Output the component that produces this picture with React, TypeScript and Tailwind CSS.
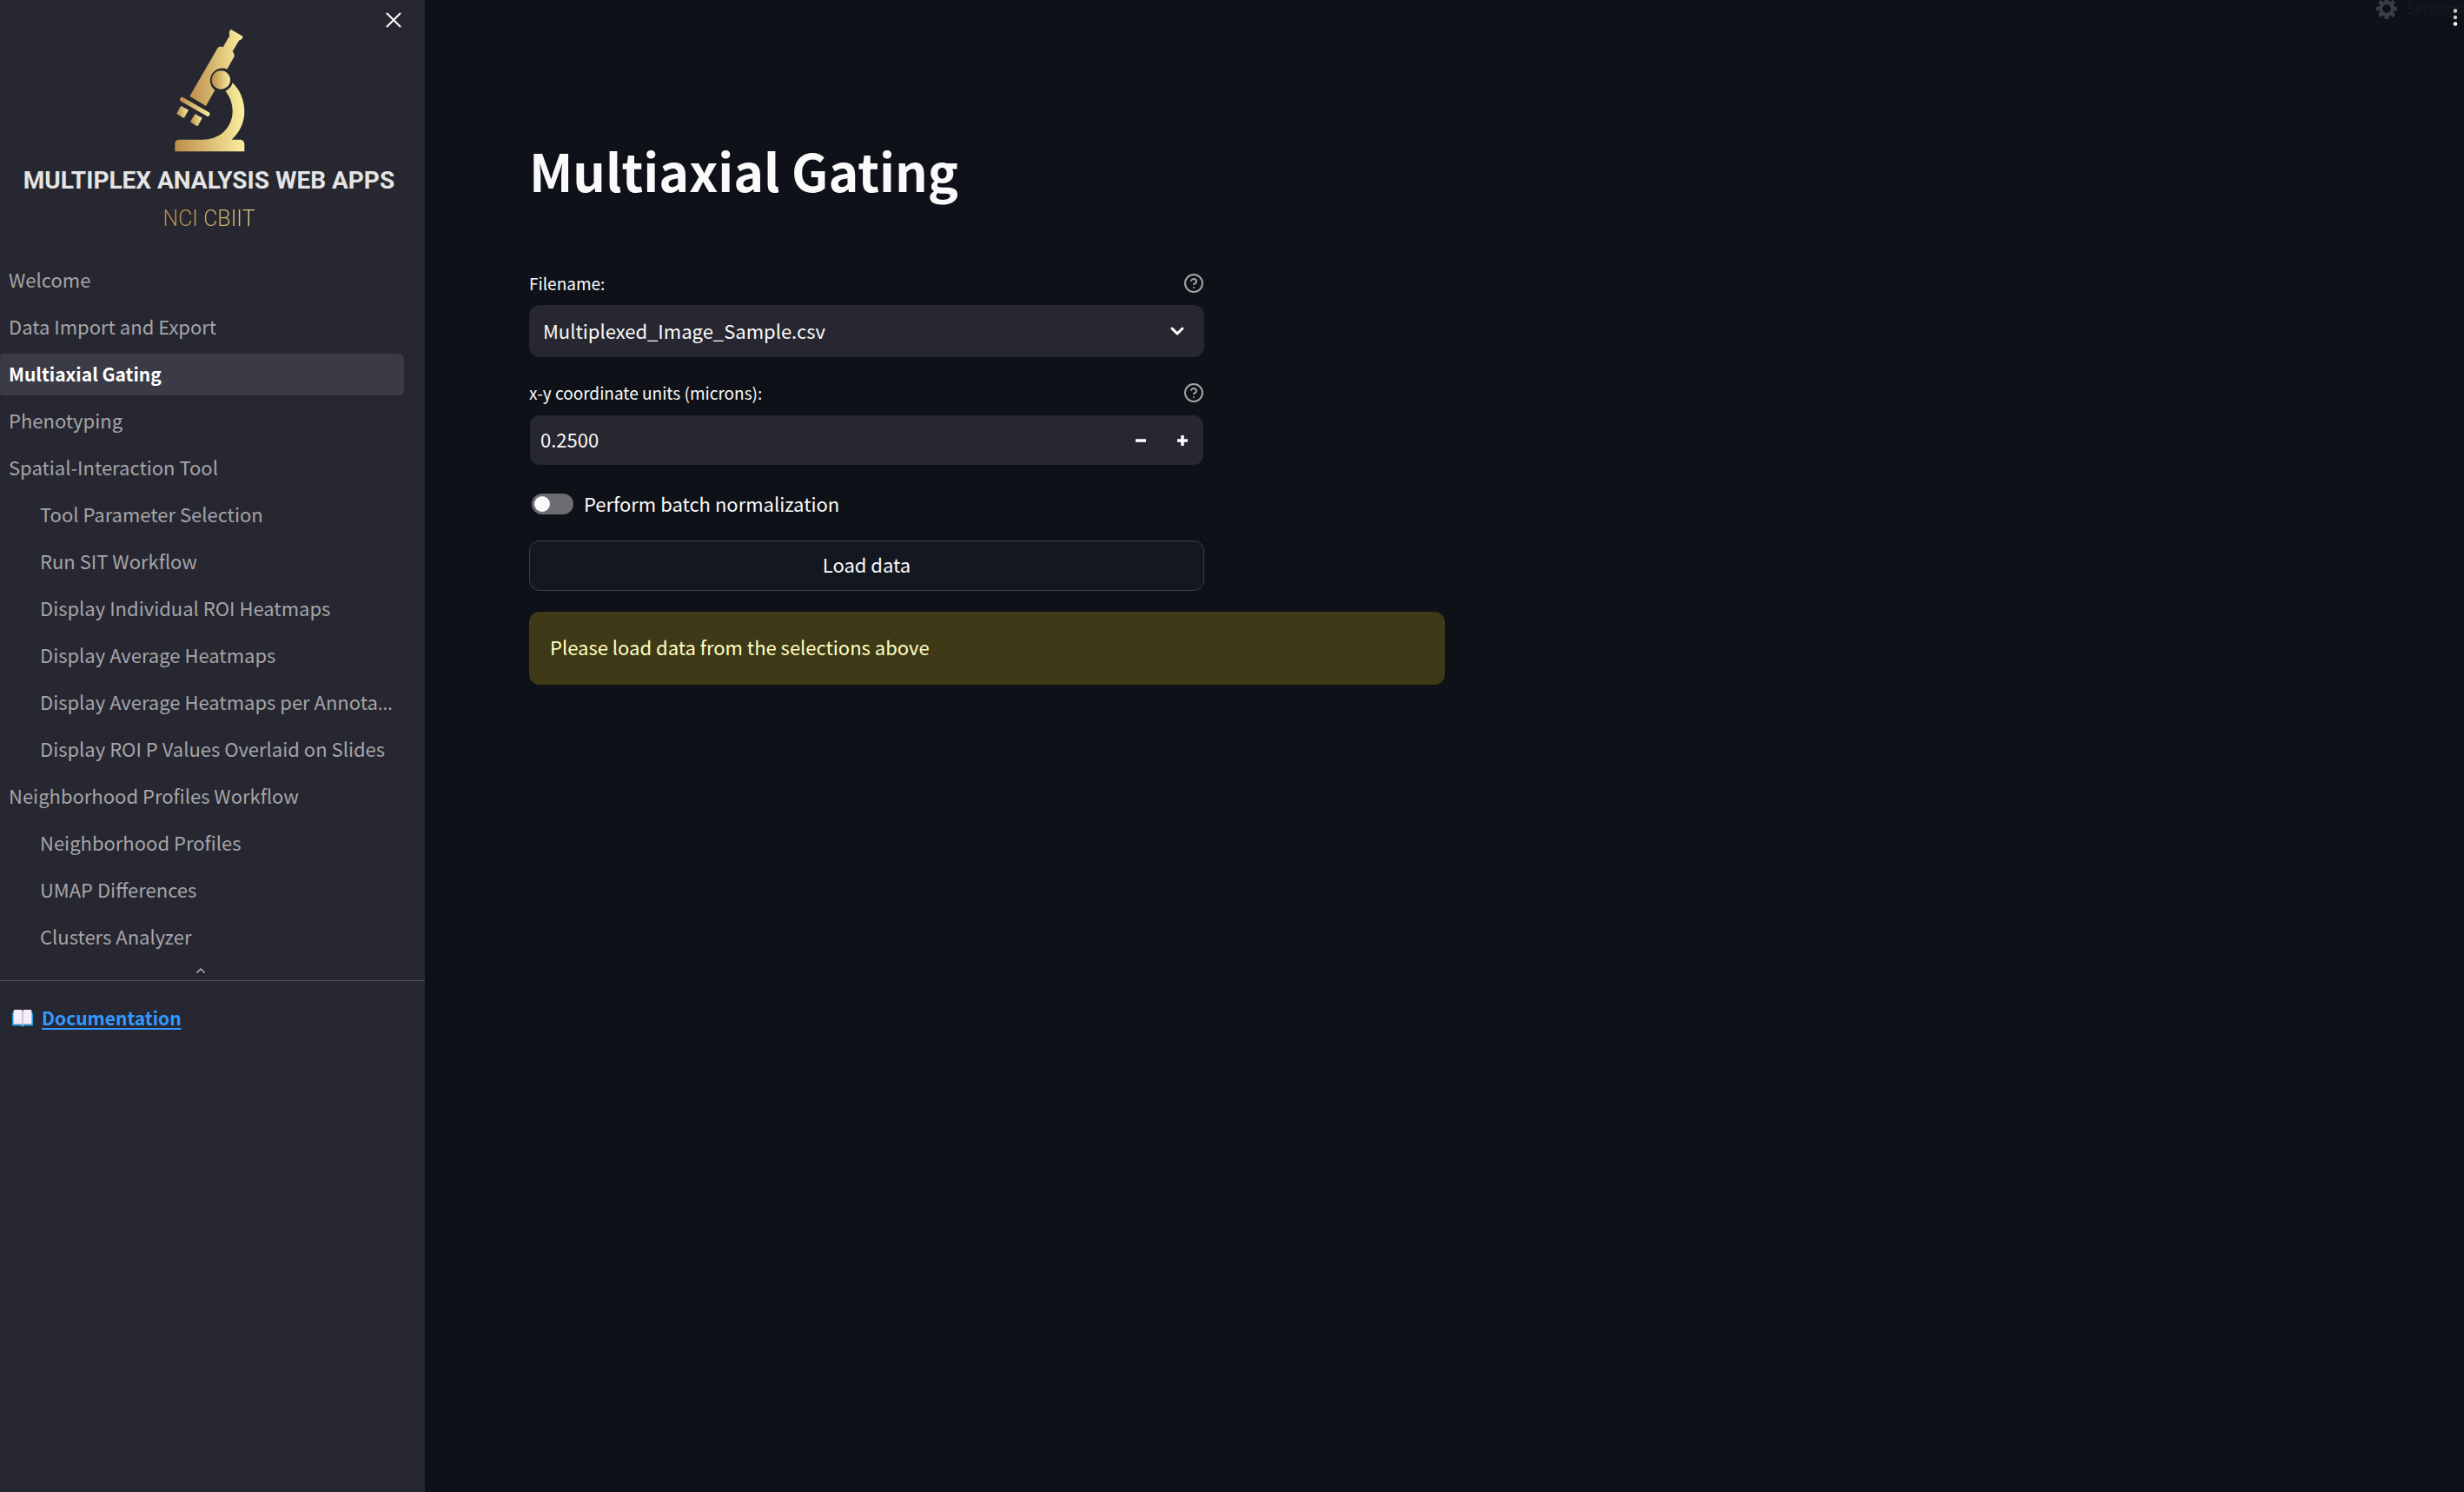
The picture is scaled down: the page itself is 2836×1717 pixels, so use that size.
import { useState } from 'react';

type NavItem = { label: string; nested?: boolean; active?: boolean; shortened?: boolean };

const navItems: NavItem[] = [
  { label: 'Welcome' },
  { label: 'Data Import and Export' },
  { label: 'Multiaxial Gating', active: true },
  { label: 'Phenotyping' },
  { label: 'Spatial-Interaction Tool' },
  { label: 'Tool Parameter Selection', nested: true },
  { label: 'Run SIT Workflow', nested: true },
  { label: 'Display Individual ROI Heatmaps', nested: true },
  { label: 'Display Average Heatmaps', nested: true },
  { label: 'Display Average Heatmaps per Annota', nested: true, shortened: true },
  { label: 'Display ROI P Values Overlaid on Slides', nested: true },
  { label: 'Neighborhood Profiles Workflow' },
  { label: 'Neighborhood Profiles', nested: true },
  { label: 'UMAP Differences', nested: true },
  { label: 'Clusters Analyzer', nested: true },
];

function MicroscopeLogo() {
  return (
    <svg viewBox="60 40 246 426" className="h-[142px] w-[82px]" aria-hidden="true">
      <defs>
        <linearGradient id="gold">
          <stop offset="0" stopColor="#bd8d4b" />
          <stop offset="1" stopColor="#f9ee9e" />
        </linearGradient>
      </defs>
      <g fill="url(#gold)">
        <path d="M257 42 L298 66 Q300 76 286 80 L263 119 Q269 124 269 136 L244 180 A42 42 0 0 0 202 252 L171 307 L115 273 L212 106 Q218 98 230 104 L253 64 Q248 52 257 42 Z" />
        <circle cx="223" cy="217" r="32" />
        <path d="M90 276 L182 329 Q187 333 184 338 Q180 345 175 342 L83 290 Q79 287 82 281 Q86 274 90 276 Z" />
        <path d="M86 307 L111 321 L97 346 Q95 349 91 347 L71 335 Q70 332 72 329 L83 309 Z" />
        <path d="M134 334 L158 348 L145 373 Q142 377 138 375 L119 363 Q117 360 119 357 Z" />
        <path d="M64 464 V438 Q64 423 79 423 H160 C218 423 263 382 263 325 C263 298 254 274 238 255 Q258 246 263 227 C289 251 304 287 304 326 C304 364 287 399 260 423 H288 Q304 423 304 440 V464 Z" />
      </g>
    </svg>
  );
}

function HelpIcon() {
  return (
    <svg viewBox="0 0 24 24" className="size-6" fill="none" stroke="#a3a4a6" strokeWidth="2" strokeLinecap="round" strokeLinejoin="round" aria-hidden="true">
      <circle cx="12" cy="12" r="10" />
      <path d="M9.09 9a3 3 0 0 1 5.83 1c0 2-3 3-3 3" />
      <path d="M12 17h.01" />
    </svg>
  );
}

function FieldLabel({ htmlFor, children }: { htmlFor: string; children: string }) {
  return (
    <div className="flex h-[30px] items-center justify-between">
      <label htmlFor={htmlFor} className="text-[19px] leading-[30px]">
        {children}
      </label>
      <button type="button" aria-label={`Help for ${children}`}>
        <HelpIcon />
      </button>
    </div>
  );
}

function BookIcon() {
  return (
    <svg viewBox="0 0 24 20" className="h-5 w-6" aria-hidden="true">
      <path d="M0 3.500h24v15H14l-2 1.500-2-1.500H0z" fill="#1a9be0" />
      <path d="M1.500 1.500Q1.500 0 3 0h7.500L12 1.200 13.500 0H21q1.500 0 1.500 1.500V17H13.500L12 17.800 10.500 17h-9z" fill="#f3eef8" />
      <path d="M12 1v16.500" stroke="#b9b0c4" strokeWidth="1.200" />
      <path d="M1.500 16.500h9l1.500.7 1.500-.7h9" stroke="#b9b0c4" strokeWidth="1" fill="none" />
    </svg>
  );
}

function Sidebar() {
  return (
    <aside className="relative w-[489px] shrink-0 bg-[#262730]">
      <button type="button" aria-label="Close sidebar" className="absolute top-[11px] right-6 size-6">
        <svg viewBox="0 0 24 24" className="size-6" stroke="#ffffff" strokeWidth="2" strokeLinecap="round" aria-hidden="true">
          <path d="M4.500 4.500l15 15M19.500 4.500l-15 15" />
        </svg>
      </button>
      <header className="flex flex-col items-center pt-[33px] pr-2 whitespace-nowrap">
        <MicroscopeLogo />
        <p className="mt-4 font-['Roboto',sans-serif] text-[28px] leading-[34px] font-bold text-[#e4e4e4]">
          MULTIPLEX ANALYSIS WEB APPS
        </p>
        <p className="mt-2 bg-linear-to-r from-[#b58642] to-[#d9cf86] bg-clip-text font-['Roboto',sans-serif] text-[25px] leading-[38px] font-light text-transparent">
          NCI CBIIT
        </p>
      </header>
      <nav className="mt-7">
        <ul className="flex flex-col gap-1.5 pr-6">
          {navItems.map((item) => (
            <li key={item.label}>
              <a
                href="#"
                aria-current={item.active ? 'page' : undefined}
                className={
                  item.active
                    ? 'block h-12 rounded-l-sm rounded-r-md bg-[#3b3b47] pl-2.5 text-[21px] leading-[46px] font-bold whitespace-nowrap text-white'
                    : item.nested
                      ? 'block h-12 pl-[46px] leading-[45px] whitespace-nowrap text-[#a5a5a8]'
                      : 'block h-12 pl-2.5 leading-[45px] whitespace-nowrap text-[#a5a5a8]'
                }
              >
                {item.label}
                {item.shortened && <span className="font-['Open_Sans',sans-serif]">…</span>}
              </a>
            </li>
          ))}
        </ul>
        <button type="button" aria-label="Collapse navigation" className="flex h-[26px] w-full items-center justify-center border-b border-[#4d4e57] pt-0.5 pr-7">
          <svg viewBox="0 0 12 8" className="h-2 w-3" fill="none" stroke="#b5b5b8" strokeWidth="1.500" aria-hidden="true">
            <path d="M1.500 6.500L6 2l4.500 4.500" />
          </svg>
        </button>
      </nav>
      <p className="mt-6 flex items-center gap-2.5 pl-3.5 text-[21px] leading-9">
        <span className="pt-0.5">
          <BookIcon />
        </span>
        <a href="#" className="font-bold text-[#3399ff] underline decoration-2 underline-offset-3">
          Documentation
        </a>
      </p>
    </aside>
  );
}

function Toolbar() {
  return (
    <div className="absolute top-0 right-0 h-10 w-[101px] overflow-hidden">
      <div className="-mt-1 flex items-center gap-[11px]">
        <svg viewBox="-12 -12 24 24" className="size-6 shrink-0" aria-hidden="true">
          <circle r="7" fill="none" stroke="#383d49" strokeWidth="4" />
          {[0, 45, 90, 135, 180, 225, 270, 315].map((angle) => (
            <rect key={angle} x="-2.300" y="-12" width="4.600" height="5" rx="0.600" fill="#383d49" transform={`rotate(${angle})`} />
          ))}
        </svg>
        <span className="font-['Noto_Sans',sans-serif] text-[17px] leading-7 text-[#171a20]">Settings</span>
      </div>
      <button type="button" aria-label="Menu" className="absolute top-2 right-[7px]">
        <svg viewBox="0 0 6 24" className="h-6 w-1.5" aria-hidden="true">
          <circle cx="3" cy="4.500" r="2.200" fill="#cfcfcf" />
          <circle cx="3" cy="12" r="2.200" fill="#cfcfcf" />
          <circle cx="3" cy="19.500" r="2.300" fill="#ffffff" />
        </svg>
      </button>
    </div>
  );
}

export default function App() {
  const [units, setUnits] = useState(0.25);
  const [normalize, setNormalize] = useState(false);

  return (
    <div className="flex min-h-screen bg-[#0e1117] font-['Noto_Sans_CJK_SC',sans-serif] text-[22px] text-[#fafafa]">
      <Sidebar />
      <main className="relative min-w-0 flex-1 px-[120px] pt-[152px]">
        <Toolbar />
        <h1 className="text-[59px] leading-[88px] font-bold">Multiaxial Gating</h1>
        <form className="mt-[71px] w-[777px] max-w-full" onSubmit={(e) => e.preventDefault()}>
          <FieldLabel htmlFor="filename">Filename:</FieldLabel>
          <div className="relative mt-[10px]">
            <select id="filename" className="block h-[60px] w-full appearance-none rounded-xl bg-[#262730] pr-14 pb-0.5 pl-4">
              <option>Multiplexed_Image_Sample.csv</option>
            </select>
            <svg viewBox="0 0 24 24" className="pointer-events-none absolute top-[18px] right-[19px] size-6" fill="none" stroke="#ffffff" strokeWidth="3" strokeLinecap="round" strokeLinejoin="round" aria-hidden="true">
              <path d="M6 9l6 6 6-6" />
            </svg>
          </div>
          <div className="mt-[26px]">
            <FieldLabel htmlFor="units">x-y coordinate units (microns):</FieldLabel>
            <div className="mt-[10px] flex h-[59px] overflow-hidden rounded-xl border border-[#0e1117] bg-[#262730]">
              <input
                id="units"
                type="text"
                inputMode="decimal"
                className="min-w-0 flex-1 bg-transparent pb-0.5 pl-3"
                value={units.toFixed(4)}
                onChange={(e) => setUnits(Number(e.target.value) || 0)}
              />
              <button type="button" aria-label="Decrease" className="flex w-12 items-center justify-center" onClick={() => setUnits(units - 0.01)}>
                <svg viewBox="0 0 12 12" className="size-3" aria-hidden="true">
                  <path d="M0 6h12" stroke="#ffffff" strokeWidth="3.500" />
                </svg>
              </button>
              <button type="button" aria-label="Increase" className="flex w-12 items-center justify-center" onClick={() => setUnits(units + 0.01)}>
                <svg viewBox="0 0 12 12" className="size-3" aria-hidden="true">
                  <path d="M0 6h12M6 0v12" stroke="#ffffff" strokeWidth="3.500" />
                </svg>
              </button>
            </div>
          </div>
          <label className="mt-[26px] flex h-9 items-center gap-3 pl-[3px]">
            <input type="checkbox" className="peer sr-only" checked={normalize} onChange={(e) => setNormalize(e.target.checked)} />
            <span className="flex h-6 w-12 items-center rounded-full bg-[#6c6d71] px-[3px] peer-checked:justify-end peer-checked:bg-[#ff4b4b]">
              <span className="size-[18px] rounded-full bg-[#fafafa]" />
            </span>
            <span className="pb-0.5 leading-9">Perform batch normalization</span>
          </label>
          <button type="submit" className="mt-6 block h-[58px] w-full rounded-xl border border-[#3e4046] bg-[#131720] pb-1 leading-9">
            Load data
          </button>
        </form>
        <div role="alert" className="mt-6 w-1/2 rounded-xl bg-[#3e3917] px-6 pt-[22px] pb-[26px] leading-9 text-[#ffffc2]">
          Please load data from the selections above
        </div>
      </main>
    </div>
  );
}
